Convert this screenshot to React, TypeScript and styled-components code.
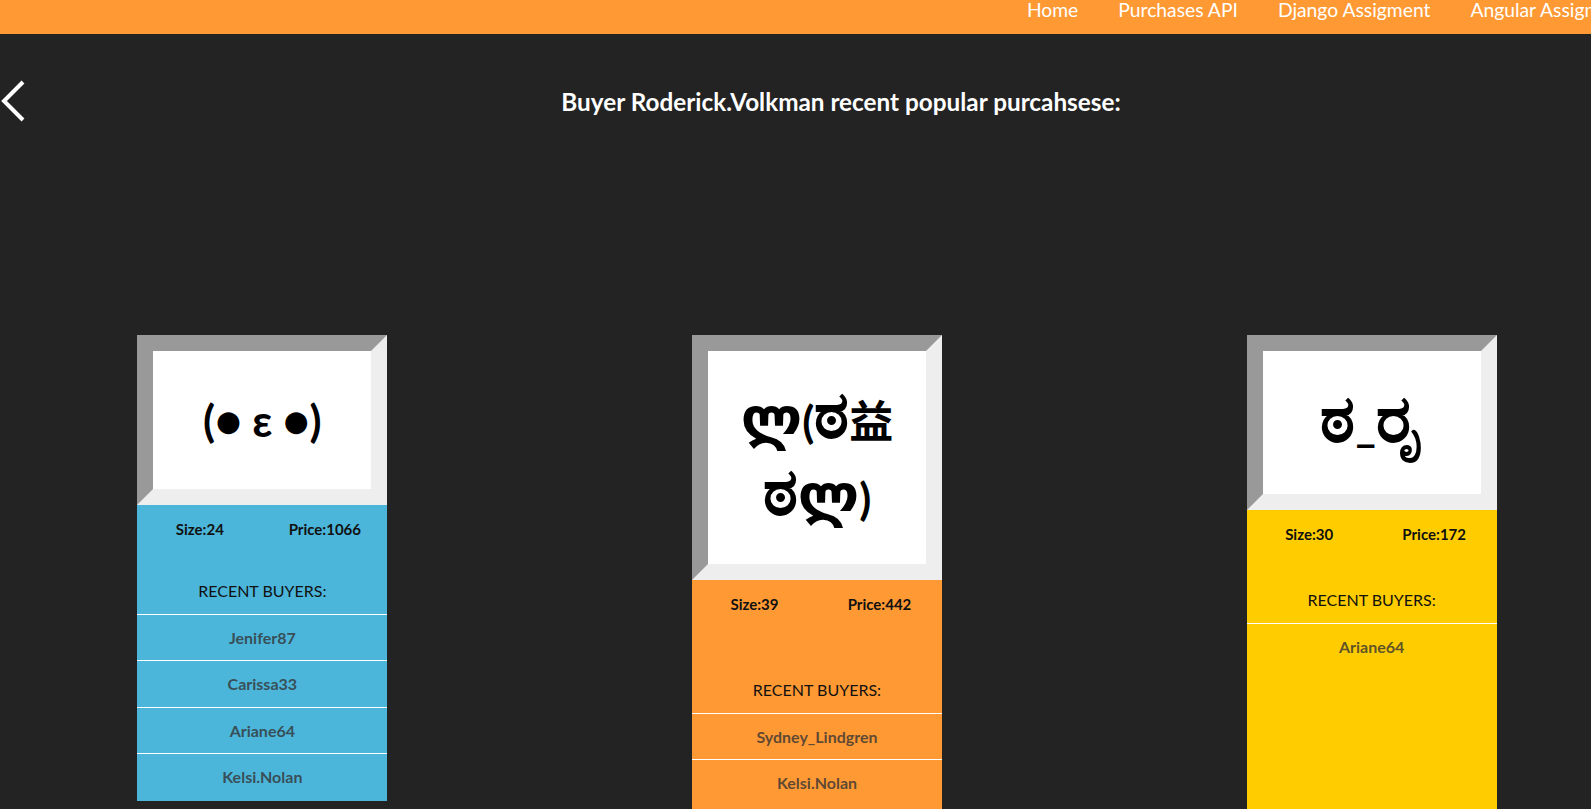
import React from "react";
import styled, { createGlobalStyle } from "styled-components";

const GlobalStyle = createGlobalStyle`
  html, body {
    margin: 0;
    padding: 0;
    background: #232323;
    overflow: hidden;
  }
  body {
    font-family: "Lato", "Noto Sans", sans-serif;
  }
  * { box-sizing: border-box; }
`;

const Page = styled.div`
  width: 1634px;
  min-height: 809px;
  background: #232323;
`;

const NavBar = styled.nav`
  height: 34px;
  background: #ff9933;
  display: flex;
  justify-content: flex-end;
  align-items: flex-start;
`;

const NavList = styled.div`
  display: flex;
  margin-right: -14px;
`;

const NavLink = styled.a`
  display: block;
  padding: 0 20px;
  color: #ffffff;
  font-size: 19.3px;
  line-height: 20px;
  text-decoration: none;
  white-space: nowrap;
`;

const TitleRow = styled.div`
  display: flex;
  align-items: center;
  margin-top: 45px;
`;

const BackButton = styled.a`
  width: 48px;
  height: 44px;
  display: flex;
  align-items: center;
  flex: none;
`;

const Title = styled.h2`
  flex: 1;
  margin: 0;
  text-align: center;
  color: #ffffff;
  font-size: 24.3px;
  line-height: 29px;
  font-weight: 700;
`;

const CardGrid = styled.div`
  display: grid;
  grid-template-columns: repeat(3, 1fr);
  column-gap: 30px;
  margin-top: 211.5px;
  justify-items: center;
  align-items: start;
`;

const Card = styled.div<{ $bg: string }>`
  width: 250px;
  background: ${(p) => p.$bg};
  display: flex;
  flex-direction: column;
`;

const Frame = styled.div<{ $padY: number }>`
  border-style: solid;
  border-width: 16px;
  border-color: #999999 #eeeeee #eeeeee #999999;
  background: #ffffff;
  padding: ${(p) => p.$padY}px 0;
  text-align: center;
  color: #000000;
  font-family: "Lato", "DejaVu Sans", "Noto Sans", "Noto Sans CJK SC", sans-serif;
  font-size: 44px;
  font-weight: 700;
  line-height: 72px;
  word-wrap: break-word;
`;

const Glyph = styled.span<{ $scale: number }>`
  font-size: ${(p) => p.$scale}em;
  line-height: 1;
`;

const Stats = styled.div`
  display: grid;
  grid-template-columns: 1fr 1fr;
  padding-top: 14px;
  text-align: center;
  color: #111111;
  font-size: 15px;
  font-weight: 700;
  line-height: 20px;
`;

const BuyersHeading = styled.h4<{ $extra: number }>`
  margin: ${(p) => 42.5 + p.$extra}px 0 0;
  padding-bottom: 12.5px;
  text-align: center;
  color: #111111;
  font-size: 16px;
  font-weight: 400;
  line-height: 20px;
`;

const BuyerList = styled.ul`
  list-style: none;
  margin: 0;
  padding: 0;
  min-height: 187px;
`;

const BuyerRow = styled.li`
  border-top: 1px solid #ffffff;
  padding: 12px 0;
  line-height: 21.5px;
  text-align: center;
  color: rgba(51, 51, 51, 0.8);
  font-size: 16px;
  font-weight: 700;
`;

type Purchase = {
  face: string;
  size: number;
  price: number;
  color: string;
  buyers: string[];
  padY: number;
  extra: number;
};

const purchases: Purchase[] = [
  {
    face: "(● ε ●)",
    size: 24,
    price: 1066,
    color: "#4bb5da",
    buyers: ["Jenifer87", "Carissa33", "Ariane64", "Kelsi.Nolan"],
    padY: 33,
    extra: 0,
  },
  {
    face: "ლ(ಠ益ಠლ)",
    size: 39,
    price: 442,
    color: "#ff9933",
    buyers: ["Sydney_Lindgren", "Kelsi.Nolan"],
    padY: 29.5,
    extra: 24,
  },
  {
    face: "ಠ_ರೃ",
    size: 30,
    price: 172,
    color: "#ffcc00",
    buyers: ["Ariane64"],
    padY: 33,
    extra: 4,
  },
];

const scriptScale = (run: string): number => {
  if (/[\u0C80-\u0CFF]/.test(run)) return 1.5;
  if (/[\u10A0-\u10FF]/.test(run)) return 1.3;
  return 1;
};

const Face = ({ text }: { text: string }) => {
  const runs = text.split(/([\u0C80-\u0CFF]+|[\u10A0-\u10FF]+)/).filter(Boolean);
  return (
    <>
      {runs.map((r, i) => {
        const s = scriptScale(r);
        return s === 1 ? (
          <React.Fragment key={i}>{r}</React.Fragment>
        ) : (
          <Glyph key={i} $scale={s}>
            {r}
          </Glyph>
        );
      })}
    </>
  );
};

const ChevronLeft = () => (
  <svg width="30" height="44" viewBox="0 0 30 44">
    <polyline
      points="23,3 4,22 23,41"
      fill="none"
      stroke="#ffffff"
      strokeWidth="4"
    />
  </svg>
);

export default function App() {
  return (
    <Page>
      <GlobalStyle />
      <NavBar>
        <NavList>
          <NavLink href="#">Home</NavLink>
          <NavLink href="#">Purchases API</NavLink>
          <NavLink href="#">Django Assigment</NavLink>
          <NavLink href="#">Angular Assigment</NavLink>
        </NavList>
      </NavBar>
      <TitleRow>
        <BackButton href="#">
          <ChevronLeft />
        </BackButton>
        <Title>Buyer Roderick.Volkman recent popular purcahsese:</Title>
      </TitleRow>
      <CardGrid>
        {purchases.map((p, i) => (
          <Card key={i} $bg={p.color}>
            <Frame $padY={p.padY}>
              <Face text={p.face} />
            </Frame>
            <Stats>
              <span>Size:{p.size}</span>
              <span>Price:{p.price}</span>
            </Stats>
            <BuyersHeading $extra={p.extra}>RECENT BUYERS:</BuyersHeading>
            <BuyerList>
              {p.buyers.map((b) => (
                <BuyerRow key={b}>{b}</BuyerRow>
              ))}
            </BuyerList>
          </Card>
        ))}
      </CardGrid>
    </Page>
  );
}
